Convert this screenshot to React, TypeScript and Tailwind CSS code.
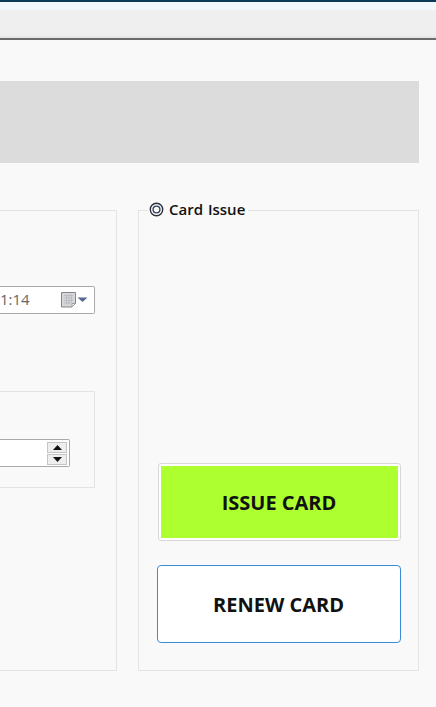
const font = "font-['Open_Sans','Noto_Sans_CJK_KR',sans-serif]";

const CalendarIcon = () => (
  <svg width="32" height="18" viewBox="0 0 32 18" fill="none">
    <path d="M1.500 1.500h14v11l-3.500 3.500h-10.500z" fill="#d6d7db" stroke="#858589" />
    <path d="M15.500 12.500l-3.500 3.500v-3.500z" fill="#f4f4f4" stroke="#a0a0a0" />
    <path d="M4 4.500h9M4 7h9M4 9.500h9M4 12h7M6.500 3.500v10M9 3.500v10M11.500 3.500v8" stroke="#b4b6bb" strokeWidth="0.7" />
    <path d="M17.500 6.500h10l-5 4.500z" fill="#56688f" />
  </svg>
);

const Spinner = () => (
  <div className="flex flex-col gap-px">
    <div className="flex h-[11px] w-[20px] items-center justify-center border border-[#c4c4c4] bg-[#eeeeee]">
      <svg width="9" height="5" viewBox="0 0 9 5">
        <path d="M4.500 0L9 5H0z" fill="#111" />
      </svg>
    </div>
    <div className="flex h-[11px] w-[20px] items-center justify-center border border-[#c4c4c4] bg-[#eeeeee]">
      <svg width="9" height="5" viewBox="0 0 9 5">
        <path d="M0 0h9L4.500 5z" fill="#111" />
      </svg>
    </div>
  </div>
);

const LegendMark = () => (
  <svg width="15" height="15" viewBox="0 0 15 15" fill="none">
    <circle cx="7.500" cy="7.500" r="6.200" stroke="#2a2f3a" strokeWidth="1.400" />
    <circle cx="7.500" cy="7.500" r="3.400" stroke="#34405a" strokeWidth="1.400" />
  </svg>
);

const App = () => {
  return (
    <div className={`h-[707px] w-[436px] overflow-hidden bg-[#f9f9f9] ${font}`}>
      <div className="h-[2px] bg-[#0c3a58]" />
      <div className="h-[8px] bg-[#f3f8fd]" />
      <div className="h-[26px] bg-[#efefef]" />
      <div className="h-[2px] bg-[#e6e6e6]" />
      <div className="h-[2px] bg-[#6a6a6a]" />

      <div className="pr-[17px] pt-[41px]">
        <div className="h-[82px] bg-[#dcdcdc]" />

        <div className="mt-[47px] flex h-[461px] gap-[21px]">
          <div className="flex w-[117px] flex-col border border-l-0 border-[#e4e4e4] pr-[21px] pt-[75px]">
            <div className="flex h-[28px] items-center justify-between rounded-r-[2px] border border-l-0 border-[#a9a9a9] bg-white pb-[1px] pr-[2px]">
              <span className="text-[15px] leading-none text-[#666]">1:14</span>
              <CalendarIcon />
            </div>

            <div className="mt-[77px] flex h-[97px] items-start border border-l-0 border-[#e4e4e4] pr-[24px] pt-[47px]">
              <div className="flex h-[28px] w-full items-center justify-end rounded-r-[2px] border border-l-0 border-[#a9a9a9] bg-white pr-[2px]">
                <Spinner />
              </div>
            </div>
          </div>

          <div className="relative flex w-[281px] flex-col items-center border border-[#e4e4e4] pt-[252px]">
            <div className="absolute left-[9px] top-[-12px] flex h-[20px] items-center gap-[5px] bg-[#f9f9f9] pl-[1px] pr-[3px]">
              <LegendMark />
              <span className="text-[15px] font-semibold leading-none text-[#111] [word-spacing:1px]">Card Issue</span>
            </div>

            <button className="ml-px flex h-[78px] w-[243px] rounded-[3px] border border-[#d8d8d8] bg-white p-[2px] text-[20px] font-bold text-[#111]">
              <span className="flex h-full w-full items-center justify-center bg-[#adff2f] pt-[2px]">ISSUE CARD</span>
            </button>
            <button className="mt-[24px] flex h-[78px] w-[244px] items-center justify-center rounded-[4px] border border-[#3a8cd8] bg-white pt-[2px] text-[20px] font-bold text-[#111]">
              RENEW CARD
            </button>
          </div>
        </div>
      </div>
    </div>
  );
};

export default App;
